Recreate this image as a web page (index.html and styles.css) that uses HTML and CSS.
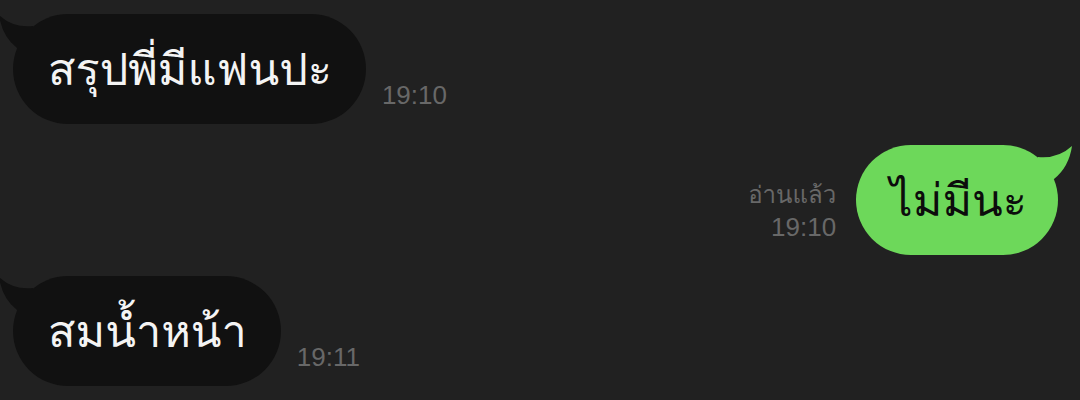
FILE: index.html
```html
<!DOCTYPE html>
<html lang="th">
<head>
<meta charset="utf-8">
<link rel="stylesheet" href="styles.css">
</head>
<body>
<div class="chat">
  <div class="row row-in">
    <div class="bubble bubble-in">
      <svg class="tail tail-in" viewBox="0 0 34 36" width="34" height="36"><path d="M34,12 Q14,14 0,1 Q3,22 18,34 L34,34 Z"/></svg>
      <span class="msg">สรุปพี่มีแฟนปะ</span>
    </div>
    <div class="meta"><span class="time">19:10</span></div>
  </div>
  <div class="row row-out">
    <div class="meta meta-out">
      <span class="read">อ่านแล้ว</span>
      <span class="time">19:10</span>
    </div>
    <div class="bubble bubble-out">
      <svg class="tail tail-out" viewBox="0 0 34 36" width="34" height="36"><path d="M0,12 Q20,14 34,1 Q31,22 16,34 L0,34 Z"/></svg>
      <span class="msg">ไม่มีนะ</span>
    </div>
  </div>
  <div class="row row-in">
    <div class="bubble bubble-in">
      <svg class="tail tail-in" viewBox="0 0 34 36" width="34" height="36"><path d="M34,12 Q14,14 0,1 Q3,22 18,34 L34,34 Z"/></svg>
      <span class="msg">สมน้ำหน้า</span>
    </div>
    <div class="meta"><span class="time">19:11</span></div>
  </div>
</div>
</body>
</html>
```
FILE: styles.css
```css
html, body {
  margin: 0;
  padding: 0;
  background: #212121;
}
body {
  width: 1080px;
  height: 400px;
  overflow: hidden;
  font-family: "Loma", "Garuda", "Kinnari", "Noto Sans Thai Looped", "Noto Sans Thai", "Noto Sans", "DejaVu Sans", sans-serif;
}
.chat {
  display: flex;
  flex-direction: column;
  gap: 21px;
  padding: 14px 22px 0 13px;
}
.row {
  display: flex;
  align-items: flex-end;
}
.row-out {
  justify-content: flex-end;
  gap: 20px;
}
.row-in {
  gap: 16px;
}
.bubble {
  position: relative;
  height: 110px;
  border-radius: 55px;
  display: flex;
  align-items: center;
  padding: 0 34px 0 35px;
  box-sizing: border-box;
}
.bubble-in {
  background: #111111;
  color: #f4f4f4;
}
.bubble-out {
  background: #6dd85a;
  color: #0c0c0c;
  padding: 0 31px 0 34px;
}
.msg {
  font-size: 45px;
  line-height: 1;
  white-space: nowrap;
}
.tail {
  position: absolute;
  top: 0;
}
.tail-in {
  left: -14px;
  fill: #111111;
}
.tail-out {
  right: -14px;
  fill: #6dd85a;
}
.meta {
  display: flex;
  flex-direction: column;
  align-items: flex-end;
  margin-bottom: 14px;
  font-family: "Liberation Sans", Arial, sans-serif;
  color: #686868;
  font-size: 26px;
  line-height: 30px;
}
.meta-out {
  margin-bottom: 12px;
  line-height: 32px;
}
.read {
  font-size: 24px;
  font-family: "Loma", "Garuda", "Noto Sans Thai Looped", "Noto Sans Thai", "Noto Sans", "DejaVu Sans", sans-serif;
}
```
